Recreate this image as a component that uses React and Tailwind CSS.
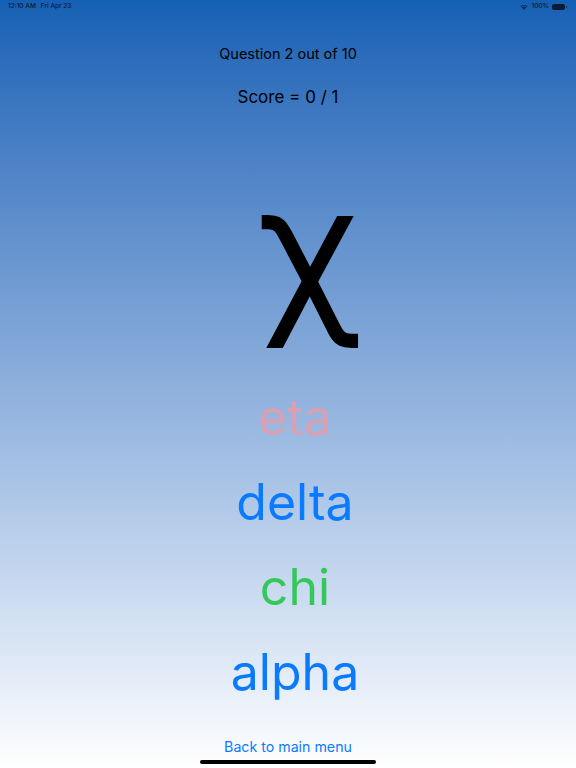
import React from "react";

function Wifi() {
  return (
    <svg width="8" height="6" viewBox="0 0 16 12">
      <path d="M8 11.5 L5.6 9 A3.4 3.4 0 0 1 10.4 9 Z" fill="#0b1b33" />
      <path d="M3.8 7.2 A6 6 0 0 1 12.2 7.2 L11 8.4 A4.3 4.3 0 0 0 5 8.4 Z" fill="#0b1b33" />
      <path d="M1.2 4.6 A9.6 9.6 0 0 1 14.8 4.6 L13.6 5.8 A7.9 7.9 0 0 0 2.4 5.8 Z" fill="#0b1b33" />
    </svg>
  );
}

function Battery() {
  return (
    <div className="flex items-center">
      <div className="w-[13px] h-[6px] rounded-[2px] bg-[#0b1b33]" />
      <div className="w-[1px] h-[2px] ml-[1px] bg-[#0b1b33] opacity-60" />
    </div>
  );
}

export default function App() {
  return (
    <div
      className="relative w-full h-[768px] overflow-hidden bg-gradient-to-b from-[#1460b4] to-white"
      style={{ fontFamily: "Inter, 'Noto Sans', sans-serif" }}
    >
      {/* status bar */}
      <div className="absolute top-0 left-0 right-0 h-[14px] flex items-center justify-between px-[8px] text-[6.5px] text-[#0b1b33] font-medium">
        <div className="flex gap-[5px]">
          <span>12:10 AM</span>
          <span>Fri Apr 23</span>
        </div>
        <div className="flex items-center gap-[3px] pr-[1px]">
          <Wifi />
          <span>100%</span>
          <Battery />
        </div>
      </div>

      <div className="flex flex-col items-center pt-[44px] text-black">
        <div className="text-[14.5px] leading-[20px]">Question 2 out of 10</div>
        <div className="mt-[21px] text-[17px] leading-[24px]">Score = 0 / 1</div>

        <div className="mt-[44px] h-[190px] flex items-center justify-center pl-[44px] text-[176px] leading-none">
          χ
        </div>

        <div className="mt-[32px] flex flex-col items-center pl-[14px] text-[50px] leading-[85px]">
          <div className="text-[#d8a0b2]">eta</div>
          <div className="text-[#0a7aff]">delta</div>
          <div className="text-[#34c759]">chi</div>
          <div className="text-[#0a7aff]">alpha</div>
        </div>
      </div>

      <div className="absolute left-0 right-0 top-[737px] flex justify-center text-[14.2px] leading-[20px] text-[#0a7aff]">
        Back to main menu
      </div>
      <div className="absolute left-[200px] top-[760px] w-[176px] h-[4px] rounded-full bg-black" />
    </div>
  );
}
